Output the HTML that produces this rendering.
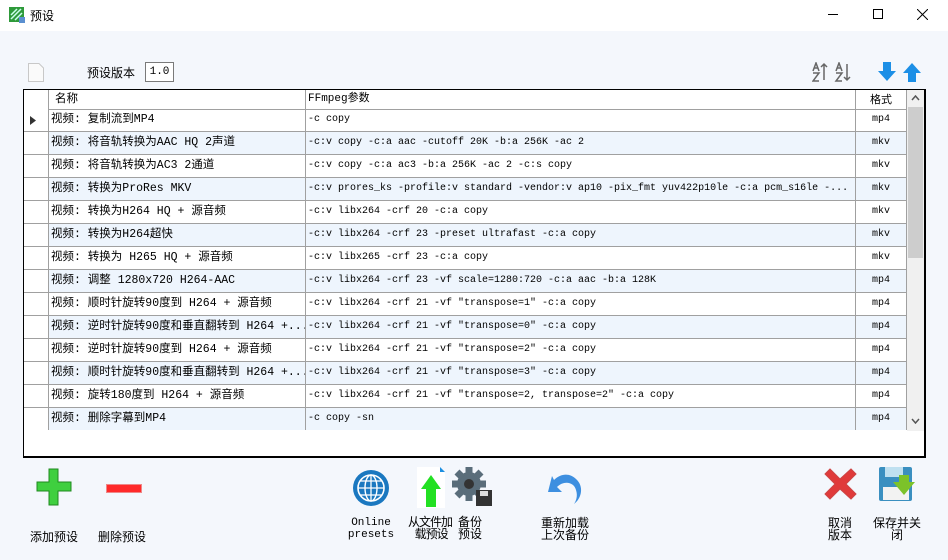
<!DOCTYPE html>
<html><head><meta charset="utf-8"><style>
*{margin:0;padding:0;box-sizing:border-box}
body{width:948px;height:560px;background:#f4f7fc;position:relative;overflow:hidden;font-family:"Liberation Sans","Noto Sans CJK SC",sans-serif;font-size:12px;color:#000}
.tb{position:absolute;left:0;top:0;width:948px;height:31px;background:#fff}
.abs{position:absolute}
.tbl{position:absolute;left:23px;top:89px;width:903px;height:369px;border:1px solid #000;border-bottom:2px solid #000;border-right:2px solid #000;background:#fff;overflow:hidden}
.row{position:absolute;left:0;height:23px;width:883px;border-bottom:1px solid #a0a0a0}
.c{position:absolute;top:0;height:22px;line-height:22px;border-right:1px solid #a0a0a0;white-space:nowrap;overflow:hidden}
.rh{left:0;width:25px;background:#fff}
.n{left:25px;width:257px;padding-left:2px;font-family:"Liberation Mono","Noto Sans CJK SC",monospace;font-size:11.5px}
.p{left:282px;width:550px;padding-left:2px;font-family:"Liberation Mono","Noto Sans CJK SC",monospace;font-size:10px}
.f{left:832px;width:51px;text-align:center;font-family:"Liberation Mono",monospace;font-size:10px}
.alt .n,.alt .p,.alt .f{background:#eef5fd}
.lbl{position:absolute;text-align:center;line-height:13px;font-size:12px;white-space:nowrap}
.m{font-family:"Liberation Mono",monospace;font-size:11px}
</style></head><body>
<div class="tb">
<svg class="abs" style="left:9px;top:7px" width="16" height="16"><rect x="0" y="0" width="15" height="15" fill="#2e9a3a"/><path d="M2 12 L12 2 M2 8 L8 2 M6 13 L13 6" stroke="#cfe" stroke-width="1.5"/><rect x="10" y="10" width="6" height="6" fill="#5a8fd0"/></svg>
<div class="abs" style="left:30px;top:7px;font-size:12px">预设</div>
<div class="abs" style="left:828px;top:14px;width:10px;height:1px;background:#000"></div>
<div class="abs" style="left:873px;top:9px;width:10px;height:10px;border:1px solid #000"></div>
<svg class="abs" style="left:917px;top:9px" width="11" height="11"><path d="M0 0L11 11M11 0L0 11" stroke="#000"/></svg>
</div>
<svg class="abs" style="left:28px;top:63px" width="16" height="19"><path d="M0.5 0.5H11L15.5 5V18.5H0.5Z" fill="#fafafa" stroke="#c8c8c8"/></svg>
<div class="abs" style="left:87px;top:64px">预设版本</div>
<div class="abs m" style="left:145px;top:62px;width:29px;height:20px;border:1px solid #7a7a7a;background:#fff;line-height:18px;text-align:center;font-size:11px">1.0</div>
<svg class="abs" style="left:812px;top:62px" width="44" height="20"><g fill="none" stroke="#666" stroke-width="1.5"><path d="M1 9L4 1L7 9M2 6H6"/><path d="M1 11H7L1 19H7"/><path d="M12 2V18M9 5L12 2L15 5"/><path d="M24 9L27 1L30 9M25 6H29"/><path d="M24 11H30L24 19H30"/><path d="M35 2V18M32 15L35 18L38 15"/></g></svg>
<svg class="abs" style="left:878px;top:62px" width="44" height="20"><path d="M5 0H13V9H18L9 19L0 9H5Z" fill="#1c8fe6"/><path d="M30 20H38V11H43L34 1L25 11H30Z" fill="#1c8fe6"/></svg>
<div class="tbl">
<div class="row" style="top:0;height:20px;background:#fff"><div class="c rh" style="height:19px"></div><div class="c n" style="height:19px;line-height:19px;padding-left:6px;width:257px">名称</div><div class="c p" style="height:19px;line-height:19px;font-size:11px">FFmpeg参数</div><div class="c f" style="height:19px;line-height:19px;font-family:'Noto Sans CJK SC';font-size:11px">格式</div></div>
<div class="row" style="top:19px"><div class="c rh"><svg style="position:absolute;left:6px;top:7px" width="6" height="9"><path d="M0 0L6 4.5L0 9Z" fill="#333"/></svg></div><div class="c n">视频: 复制流到MP4</div><div class="c p">-c copy</div><div class="c f">mp4</div></div>
<div class="row alt" style="top:42px"><div class="c rh"></div><div class="c n">视频: 将音轨转换为AAC HQ 2声道</div><div class="c p">-c:v copy -c:a aac -cutoff 20K -b:a 256K -ac 2</div><div class="c f">mkv</div></div>
<div class="row" style="top:65px"><div class="c rh"></div><div class="c n">视频: 将音轨转换为AC3 2通道</div><div class="c p">-c:v copy -c:a ac3 -b:a 256K -ac 2 -c:s copy</div><div class="c f">mkv</div></div>
<div class="row alt" style="top:88px"><div class="c rh"></div><div class="c n">视频: 转换为ProRes MKV</div><div class="c p">-c:v prores_ks -profile:v standard -vendor:v ap10 -pix_fmt yuv422p10le -c:a pcm_s16le -...</div><div class="c f">mkv</div></div>
<div class="row" style="top:111px"><div class="c rh"></div><div class="c n">视频: 转换为H264 HQ + 源音频</div><div class="c p">-c:v libx264 -crf 20 -c:a copy</div><div class="c f">mkv</div></div>
<div class="row alt" style="top:134px"><div class="c rh"></div><div class="c n">视频: 转换为H264超快</div><div class="c p">-c:v libx264 -crf 23 -preset ultrafast -c:a copy</div><div class="c f">mkv</div></div>
<div class="row" style="top:157px"><div class="c rh"></div><div class="c n">视频: 转换为 H265 HQ + 源音频</div><div class="c p">-c:v libx265 -crf 23 -c:a copy</div><div class="c f">mkv</div></div>
<div class="row alt" style="top:180px"><div class="c rh"></div><div class="c n">视频: 调整 1280x720 H264-AAC</div><div class="c p">-c:v libx264 -crf 23 -vf scale=1280:720 -c:a aac -b:a 128K</div><div class="c f">mp4</div></div>
<div class="row" style="top:203px"><div class="c rh"></div><div class="c n">视频: 顺时针旋转90度到 H264 + 源音频</div><div class="c p">-c:v libx264 -crf 21 -vf "transpose=1" -c:a copy</div><div class="c f">mp4</div></div>
<div class="row alt" style="top:226px"><div class="c rh"></div><div class="c n">视频: 逆时针旋转90度和垂直翻转到 H264 +...</div><div class="c p">-c:v libx264 -crf 21 -vf "transpose=0" -c:a copy</div><div class="c f">mp4</div></div>
<div class="row" style="top:249px"><div class="c rh"></div><div class="c n">视频: 逆时针旋转90度到 H264 + 源音频</div><div class="c p">-c:v libx264 -crf 21 -vf "transpose=2" -c:a copy</div><div class="c f">mp4</div></div>
<div class="row alt" style="top:272px"><div class="c rh"></div><div class="c n">视频: 顺时针旋转90度和垂直翻转到 H264 +...</div><div class="c p">-c:v libx264 -crf 21 -vf "transpose=3" -c:a copy</div><div class="c f">mp4</div></div>
<div class="row" style="top:295px"><div class="c rh"></div><div class="c n">视频: 旋转180度到 H264 + 源音频</div><div class="c p">-c:v libx264 -crf 21 -vf "transpose=2, transpose=2" -c:a copy</div><div class="c f">mp4</div></div>
<div class="row alt" style="top:318px;border-bottom:none"><div class="c rh"></div><div class="c n">视频: 删除字幕到MP4</div><div class="c p">-c copy -sn</div><div class="c f">mp4</div></div>
<div class="abs" style="left:883px;top:0;width:17px;height:341px;background:#f0f0f0"><div class="abs" style="left:1px;top:17px;width:15px;height:151px;background:#cdcdcd"></div><svg class="abs" style="left:4px;top:5px" width="9" height="6"><path d="M1 5L4.5 1L8 5" fill="none" stroke="#555" stroke-width="1.5"/></svg><svg class="abs" style="left:4px;top:328px" width="9" height="6"><path d="M1 1L4.5 5L8 1" fill="none" stroke="#555" stroke-width="1.5"/></svg></div>
</div>
<svg class="abs" style="left:36px;top:468px" width="36" height="38"><path d="M13 1H22V14H35V23H22V37H13V23H1V14H13Z" fill="#3fcf3f" stroke="#1f8a1f"/></svg>
<svg class="abs" style="left:106px;top:484px" width="36" height="9"><rect x="0.5" y="0.5" width="35" height="8" fill="#ff2a2a" stroke="#e88"/></svg>
<div class="lbl" style="left:22px;top:531px;width:64px">添加预设</div>
<div class="lbl" style="left:90px;top:531px;width:64px">删除预设</div>
<svg class="abs" style="left:352px;top:469px" width="38" height="38"><circle cx="19" cy="19" r="18" fill="#1b78c0"/><circle cx="19" cy="19" r="13" fill="none" stroke="#fff" stroke-width="1.6"/><ellipse cx="19" cy="19" rx="6" ry="13" fill="none" stroke="#fff" stroke-width="1.4"/><path d="M6 19H32M19 6V32M8 12H30M8 26H30" stroke="#fff" stroke-width="1.3"/></svg>
<div class="lbl m" style="left:336px;top:517px;width:70px;line-height:12px">Online<br>presets</div>
<svg class="abs" style="left:417px;top:467px" width="28" height="41"><path d="M0 0H22L28 6V41H0Z" fill="#fff"/><path d="M23 0L28 5H23Z" fill="#1b8ee0"/><path d="M9 40V22H4L14 8L24 22H19V40Z" fill="#22e022"/></svg>
<svg class="abs" style="left:452px;top:467px" width="40" height="40"><g transform="translate(17,17)"><circle r="12" fill="#5a6d7a"/><g fill="#5a6d7a"><rect x="-3.5" y="-17" width="7" height="8"/><rect x="-3.5" y="9" width="7" height="8"/><rect x="-17" y="-3.5" width="8" height="7"/><rect x="9" y="-3.5" width="8" height="7"/><rect x="-3.5" y="-17" width="7" height="8" transform="rotate(45)"/><rect x="-3.5" y="9" width="7" height="8" transform="rotate(45)"/><rect x="-17" y="-3.5" width="8" height="7" transform="rotate(45)"/><rect x="9" y="-3.5" width="8" height="7" transform="rotate(45)"/></g><circle r="5" fill="#333"/></g><rect x="24" y="23" width="16" height="16" fill="#333"/><rect x="28" y="24" width="8" height="5" fill="#ddd"/></svg>
<div class="lbl" style="left:404px;top:516px;width:52px;line-height:12px;letter-spacing:-1px">从文件加<br>&nbsp;载预设</div>
<div class="lbl" style="left:455px;top:516px;width:30px;line-height:12px">备份<br>预设</div>
<svg class="abs" style="left:546px;top:468px" width="40" height="38"><path d="M6 8 L2 24 L16 24 L11 19 C18 12 28 14 30 22 C32 28 30 33 28 36 C36 30 38 18 30 11 C24 5 15 5 8 12 Z" fill="#3d8fe0"/></svg>
<div class="lbl" style="left:536px;top:517px;width:58px;line-height:12px">重新加载<br>上次备份</div>
<svg class="abs" style="left:823px;top:467px" width="35" height="34"><path d="M2 7L7 2L17 12L28 2L33 7L23 17L33 27L28 32L17 22L7 32L2 27L12 17Z" fill="#e03a3a" stroke="#c44"/></svg>
<div class="lbl" style="left:820px;top:517px;width:40px;line-height:12px">取消<br>版本</div>
<svg class="abs" style="left:879px;top:467px" width="38" height="37"><rect x="0" y="0" width="33" height="34" rx="2" fill="#3a8fc0"/><rect x="6" y="0" width="18" height="10" fill="#bfe0f0"/><rect x="4" y="20" width="26" height="13" fill="#f2f2f2"/><path d="M20 15V8H30V15H36L25 28L14 15Z" fill="#7cc22a"/></svg>
<div class="lbl" style="left:869px;top:517px;width:56px;line-height:12px">保存并关<br>闭</div>
</body></html>
